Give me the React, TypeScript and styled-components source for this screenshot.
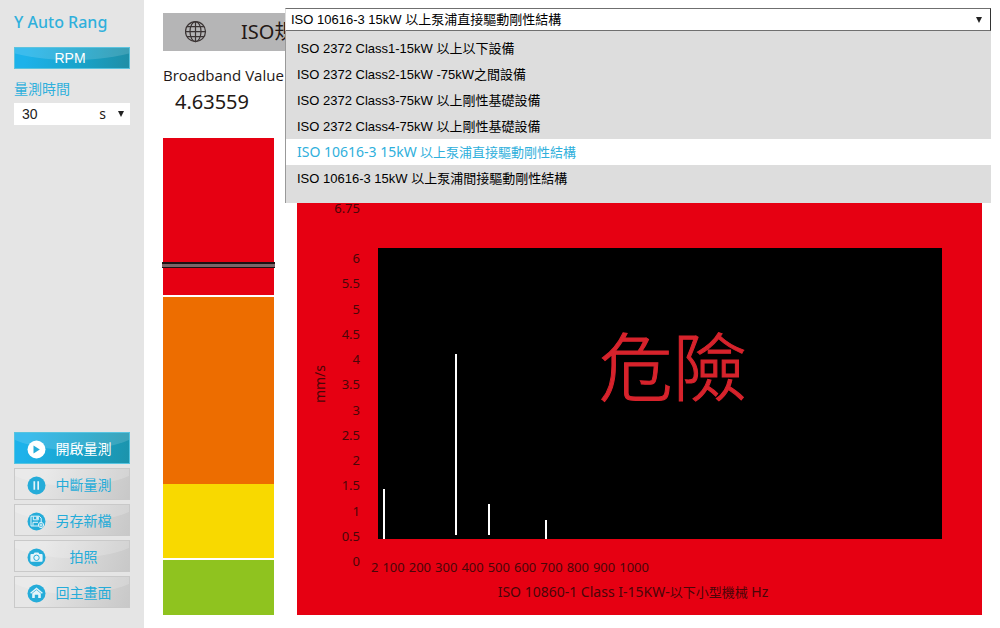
import React from "react";
import styled, { createGlobalStyle, css } from "styled-components";

const GlobalStyle = createGlobalStyle`
  *, *::before, *::after { box-sizing: border-box; }
  body {
    margin: 0;
    background: #fff;
    color: #231815;
    font-family: "Noto Sans", "Noto Sans CJK TC", sans-serif;
  }
  button, select { font: inherit; }
`;

const Page = styled.div`
  display: flex;
  min-height: 100vh;
`;

const Sidebar = styled.aside`
  display: flex;
  flex-direction: column;
  flex: 0 0 144px;
  padding: 10px 14px 20px;
  background: #e5e5e5;
`;

const SidebarTitle = styled.h1`
  margin: 0;
  font-size: 16px;
  line-height: 24px;
  font-weight: 500;
  color: #2fb0dc;
  white-space: nowrap;
`;

const glossy = css`
  position: relative;
  overflow: hidden;
  &::before {
    content: "";
    position: absolute;
    left: -30%;
    width: 160%;
    bottom: 42%;
    height: 300%;
    border-radius: 50%;
    background: rgba(255, 255, 255, 0.14);
  }
  > * { position: relative; }
`;

const RpmButton = styled.button`
  ${glossy}
  height: 22px;
  margin-top: 13px;
  padding: 0 4px 0 0;
  border: 1px solid #5cc3de;
  background: linear-gradient(100deg, #1db2ea 10%, #18a2c8 60%, #1f8ea6);
  color: #fff;
  font-family: "Liberation Sans", sans-serif;
  font-size: 14px;
  line-height: 20px;
`;

const FieldLabel = styled.label`
  margin-top: 10px;
  font-size: 14px;
  line-height: 20px;
  color: #2fb0dc;
`;

const TimeField = styled.div`
  display: grid;
  align-items: center;
  height: 22px;
  margin-top: 4px;
  background: #fff;
  > * { grid-area: 1 / 1; }
`;

const TimeSelect = styled.select`
  appearance: none;
  width: 100%;
  height: 22px;
  padding: 0 8px;
  border: 0;
  background: transparent;
  color: #222;
  font-family: "Liberation Sans", sans-serif;
  font-size: 14px;
`;

const Unit = styled.span`
  justify-self: end;
  margin-right: 24px;
  font-size: 14px;
  line-height: 20px;
  pointer-events: none;
`;

const Arrow = styled.svg<{ $gap: number }>`
  justify-self: end;
  margin-right: ${(p) => p.$gap}px;
  pointer-events: none;
`;

const Actions = styled.nav`
  display: flex;
  flex-direction: column;
  gap: 4px;
  margin-top: auto;
`;

const ActionButton = styled.button<{ $primary?: boolean }>`
  ${glossy}
  display: flex;
  align-items: center;
  height: 32px;
  padding: 2px 16px 0 12px;
  border: 1px solid ${(p) => (p.$primary ? "#56c4e0" : "#c9c9c9")};
  background: ${(p) =>
    p.$primary
      ? "linear-gradient(100deg, #1db2ea 10%, #18a2c8 60%, #1c93ab)"
      : "linear-gradient(110deg, #e6e6e6 20%, #c8c8c8)"};
  color: ${(p) => (p.$primary ? "#fff" : "#25acd9")};
  font-size: 14px;
  line-height: 20px;
  &::before { ${(p) => !p.$primary && "background: rgba(255, 255, 255, 0.18);"} }
`;

const ActionText = styled.span`
  flex: 1;
  margin-left: 8px;
  text-align: center;
`;

const Main = styled.main`
  position: relative;
  display: flex;
  flex-direction: column;
  flex: 1;
  min-width: 0;
  padding: 13px 18px 13px 19px;
`;

const HeaderBar = styled.header`
  display: flex;
  align-items: center;
  gap: 34px;
  height: 38px;
  padding-left: 22px;
  background: #b5b5b6;
`;

const HeaderTitle = styled.h2`
  margin: 0;
  font-size: 20px;
  line-height: 28px;
  font-weight: 400;
`;

const Content = styled.div`
  display: flex;
  flex: 1;
  gap: 23px;
`;

const LevelColumn = styled.section`
  display: flex;
  flex-direction: column;
  flex: 0 0 111px;
  min-width: 0;
  padding-top: 14px;
`;

const LevelTitle = styled.h3`
  margin: 0;
  font-family: "Open Sans", "Noto Sans", sans-serif;
  font-size: 15px;
  line-height: 20px;
  font-weight: 400;
  white-space: nowrap;
`;

const LevelValue = styled.output`
  margin: 3px 0 22px 12px;
  font-size: 20px;
  line-height: 28px;
`;

const LevelBar = styled.div`
  position: relative;
  display: flex;
  flex-direction: column;
  flex: 1;
`;

const Zone = styled.div<{ $color: string; $share: number; $gap: number }>`
  flex: ${(p) => p.$share} 0 0;
  margin-bottom: ${(p) => p.$gap}px;
  background: ${(p) => p.$color};
`;

const Marker = styled.div`
  position: absolute;
  top: 26%;
  left: -1px;
  right: -1px;
  height: 6px;
  border: solid #1c1213;
  border-width: 2px 0 1px;
  background: #7c6568;
`;

const ChartPanel = styled.section`
  display: grid;
  grid-template-columns: 35px 28px 1fr;
  grid-template-rows: 48px 328px auto;
  align-content: end;
  flex: 1;
  min-width: 0;
  margin-top: 40px;
  padding: 0 40px 13px 0;
  background: #e60012;
  color: #4a0608;
  font-size: 13px;
  line-height: 25px;
`;

const PeakLabel = styled.span`
  grid-area: 1 / 1 / 2 / 3;
  line-height: 20px;
  text-align: right;
`;

const AxisUnit = styled.span`
  grid-area: 2 / 1;
  align-self: center;
  justify-self: center;
  margin: 0 0 52px 10px;
  writing-mode: vertical-rl;
  transform: rotate(180deg);
  font-size: 14px;
  line-height: 20px;
`;

const YAxis = styled.div`
  grid-area: 2 / 2;
  display: flex;
  flex-direction: column;
  justify-content: space-between;
  text-align: right;
  white-space: nowrap;
`;

const PlotColumn = styled.div`
  grid-area: 2 / 3;
  display: flex;
  flex-direction: column;
  padding-top: 2px;
`;

const Plot = styled.div`
  display: grid;
  height: 291px;
  margin-left: 18px;
  background: #000;
  > * { grid-area: 1 / 1; }
`;

const Spectrum = styled.svg`
  width: 100%;
  height: 291px;
`;

const Warning = styled.strong`
  align-self: center;
  justify-self: center;
  margin: 0 0 62px 26px;
  color: #d7232c;
  font-family: "Noto Sans CJK TC", sans-serif;
  font-size: 74px;
  line-height: 96px;
  font-weight: 300;
  -webkit-text-stroke: 1px #d7232c;
`;

const XAxis = styled.div`
  display: flex;
  gap: 4px;
  margin: 16px 0 0 11px;
`;

const Caption = styled.p`
  grid-area: 3 / 1 / 4 / 4;
  margin: 8px 0 0 27px;
  text-align: center;
  font-size: 14px;
  line-height: 20px;
`;

const CaptionNote = styled.span`
  font-size: 13px;
`;

const StandardPicker = styled.div`
  position: absolute;
  top: 8px;
  left: 141px;
  right: 9px;
  font-size: 13px;
`;

const PickerField = styled.div`
  display: grid;
  align-items: center;
  > * { grid-area: 1 / 1; }
`;

const PickerSelect = styled.select`
  appearance: none;
  width: 100%;
  height: 23px;
  padding: 0 24px 0 5px;
  border: 1px solid #6f6f6f;
  border-left-color: #ddd;
  border-right-color: #333;
  border-radius: 0;
  background: #fff;
  color: #000;
  font-family: "Liberation Sans", "Noto Sans CJK TC", sans-serif;
`;

const Options = styled.ul`
  margin: 0;
  padding: 4px 0 12px;
  list-style: none;
  border-left: 1px solid #999;
  background: #ddd;
`;

const Option = styled.li<{ $selected?: boolean }>`
  padding: ${(p) => (p.$selected ? 1 : 2)}px 0 ${(p) => (p.$selected ? 1 : 0)}px 11px;
  line-height: 24px;
  color: ${(p) => (p.$selected ? "#2fb0dc" : "#000")};
  background: ${(p) => (p.$selected ? "#fff" : "transparent")};
  font-family: ${(p) => (p.$selected ? '"Noto Sans"' : '"Liberation Sans"')}, "Noto Sans CJK TC", sans-serif;
`;

const OptionCode = styled.span<{ $selected?: boolean }>`
  font-size: ${(p) => (p.$selected ? 14 : 13)}px;
`;

const standards = [
  ["ISO 2372 Class1-15kW", " 以上以下設備"],
  ["ISO 2372 Class2-15kW -75kW", "之間設備"],
  ["ISO 2372 Class3-75kW", " 以上剛性基礎設備"],
  ["ISO 2372 Class4-75kW", " 以上剛性基礎設備"],
  ["ISO 10616-3 15kW", " 以上泵浦直接驅動剛性結構"],
  ["ISO 10616-3 15kW", " 以上泵浦間接驅動剛性結構"],
];
const selectedStandard = 4;

const zones = [
  { color: "#e60012", share: 157, gap: 2 },
  { color: "#ed6d00", share: 187, gap: 0 },
  { color: "#f8d900", share: 74, gap: 2 },
  { color: "#8fc31f", share: 55, gap: 0 },
];

const yTicks = ["6", "5.5", "5", "4.5", "4", "3.5", "3", "2.5", "2", "1.5", "1", "0.5", "0"];
const xTicks = ["2", "100", "200", "300", "400", "500", "600", "700", "800", "900", "1000"];

const peaks = [
  { x: 6, from: 241, to: 291 },
  { x: 78, from: 106, to: 287 },
  { x: 111, from: 256, to: 287 },
  { x: 168, from: 272, to: 291 },
];

const DownArrow = ({ gap }: { gap: number }) => (
  <Arrow $gap={gap} width="6" height="6" viewBox="0 0 6 6" aria-hidden="true">
    <path d="M0 0h6L3 6z" fill="#222" />
  </Arrow>
);

const Disc = ({ primary, children }: { primary?: boolean; children: React.ReactNode }) => (
  <svg width="19" height="19" viewBox="0 0 19 19" aria-hidden="true">
    <circle cx="9.5" cy="9.5" r="9" fill={primary ? "#fff" : "#25acd9"} />
    {children}
  </svg>
);

const PlayIcon = () => (
  <Disc primary>
    <path d="M6.5 5.5 12.8 9.5 6.5 13.4z" fill="#25acd9" />
  </Disc>
);

const PauseIcon = () => (
  <Disc>
    <path d="M7.3 5.2v8.6M11.2 5.2v8.6" stroke="#e4f4fa" strokeWidth="1.7" />
  </Disc>
);

const SaveIcon = () => (
  <Disc>
    <g fill="none" stroke="#e4f4fa">
      <path d="M12.5 14H4V4.2h8.2l2 2V10" />
      <path d="M6.3 4.5v3.3h5V4.5M6 13.8v-3.5h5" />
      <circle cx="14" cy="13" r="2.6" fill="#25acd9" />
      <path d="M14 11.4v3.2M12.4 13h3.2" />
    </g>
    <path d="M9.3 4.5h1.6v2.6H9.3z" fill="#e4f4fa" />
  </Disc>
);

const CameraIcon = () => (
  <Disc>
    <path
      d="M4.4 6h2.1l1.1-1.5h3.8L12.5 6h2.1q1 0 1 1v5.8q0 1-1 1H4.4q-1 0-1-1V7q0-1 1-1z"
      fill="#e4f4fa"
    />
    <circle cx="9.5" cy="9.8" r="2.7" fill="none" stroke="#25acd9" strokeWidth="1" />
  </Disc>
);

const HomeIcon = () => (
  <Disc>
    <path d="M3.6 9.3 9.5 4.4l5.9 4.9" fill="none" stroke="#e4f4fa" strokeWidth="1.4" />
    <path d="M5.2 9.4 9.5 6l4.3 3.4v4.7h-2.6v-3.3H7.8v3.3H5.2z" fill="#e4f4fa" />
  </Disc>
);

const GlobeIcon = () => (
  <svg width="22" height="22" viewBox="0 0 22 22" fill="none" stroke="#3b3434" strokeWidth="1.2" aria-hidden="true">
    <circle cx="10.5" cy="10.6" r="10" />
    <ellipse cx="10.5" cy="10.6" rx="5.5" ry="10" />
    <path d="M10.5 0.6v20M0.5 10.6h20M2.1 5.6h16.8M2.1 15.6h16.8" />
  </svg>
);

const actions = [
  { label: "開啟量測", icon: <PlayIcon />, primary: true },
  { label: "中斷量測", icon: <PauseIcon /> },
  { label: "另存新檔", icon: <SaveIcon /> },
  { label: "拍照", icon: <CameraIcon /> },
  { label: "回主畫面", icon: <HomeIcon /> },
];

export default function App() {
  return (
    <Page>
      <GlobalStyle />
      <Sidebar>
        <SidebarTitle>Y Auto Rang</SidebarTitle>
        <RpmButton type="button">
          <span>RPM</span>
        </RpmButton>
        <FieldLabel htmlFor="duration">量測時間</FieldLabel>
        <TimeField>
          <TimeSelect id="duration" defaultValue="30">
            <option value="30">30</option>
          </TimeSelect>
          <Unit>s</Unit>
          <DownArrow gap={6} />
        </TimeField>
        <Actions>
          {actions.map((a) => (
            <ActionButton key={a.label} type="button" $primary={a.primary}>
              {a.icon}
              <ActionText>{a.label}</ActionText>
            </ActionButton>
          ))}
        </Actions>
      </Sidebar>
      <Main>
        <HeaderBar>
          <GlobeIcon />
          <HeaderTitle>
            <label htmlFor="standard">ISO規</label>
          </HeaderTitle>
        </HeaderBar>
        <Content>
          <LevelColumn>
            <LevelTitle>Broadband Value</LevelTitle>
            <LevelValue>4.63559</LevelValue>
            <LevelBar>
              {zones.map((z) => (
                <Zone key={z.color} $color={z.color} $share={z.share} $gap={z.gap} />
              ))}
              <Marker />
            </LevelBar>
          </LevelColumn>
          <ChartPanel>
            <PeakLabel>6.75</PeakLabel>
            <AxisUnit>mm/s</AxisUnit>
            <YAxis>
              {yTicks.map((t) => (
                <span key={t}>{t}</span>
              ))}
            </YAxis>
            <PlotColumn>
              <Plot>
                <Spectrum viewBox="0 0 564 291" preserveAspectRatio="none" aria-hidden="true">
                  {peaks.map((p) => (
                    <path key={p.x} d={`M${p.x} ${p.from}V${p.to}`} stroke="#fff" strokeWidth="2" />
                  ))}
                </Spectrum>
                <Warning>危險</Warning>
              </Plot>
              <XAxis>
                {xTicks.map((t) => (
                  <span key={t}>{t}</span>
                ))}
              </XAxis>
            </PlotColumn>
            <Caption>
              ISO 10860-1 Class I-15KW-<CaptionNote>以下小型機械</CaptionNote> Hz
            </Caption>
          </ChartPanel>
        </Content>
        <StandardPicker>
          <PickerField>
            <PickerSelect id="standard" defaultValue={selectedStandard}>
              {standards.map(([code, text], i) => (
                <option key={i} value={i}>
                  {code + text}
                </option>
              ))}
            </PickerSelect>
            <DownArrow gap={9} />
          </PickerField>
          <Options>
            {standards.map(([code, text], i) => (
              <Option key={i} $selected={i === selectedStandard}>
                <OptionCode $selected={i === selectedStandard}>{code}</OptionCode>
                {text}
              </Option>
            ))}
          </Options>
        </StandardPicker>
      </Main>
    </Page>
  );
}
